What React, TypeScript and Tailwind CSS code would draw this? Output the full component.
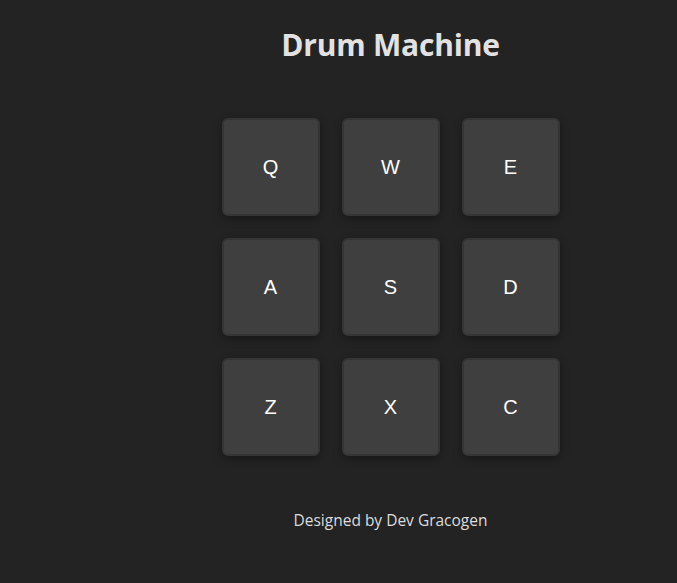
import React from 'react';

const pads = ['Q', 'W', 'E', 'A', 'S', 'D', 'Z', 'X', 'C'];

export default function App() {
  return (
    <div className="min-h-[583px] bg-[#232323] pl-[104px] flex flex-col items-center">
      <h1 className="mt-[26px] text-[30px] leading-[38px] font-bold text-[#e2e2e2] font-['Open_Sans','Noto_Sans',sans-serif] tracking-[-0.2px]">
        Drum Machine
      </h1>
      <div className="mt-[54px] grid grid-cols-3 gap-[22px]">
        {pads.map((k) => (
          <button
            key={k}
            className="w-[98px] h-[98px] rounded-[6px] bg-[#3f3f3f] border-2 border-[#353535] shadow-[0_3px_8px_rgba(0,0,0,0.35)] flex items-center justify-center text-white text-[20px] font-['Liberation_Sans',Arial,sans-serif]"
          >
            {k}
          </button>
        ))}
      </div>
      <p className="mt-[53px] text-[15.5px] leading-[22px] text-[#dcdcdc] font-['Open_Sans','Noto_Sans',sans-serif]">
        Designed by Dev Gracogen
      </p>
    </div>
  );
}
